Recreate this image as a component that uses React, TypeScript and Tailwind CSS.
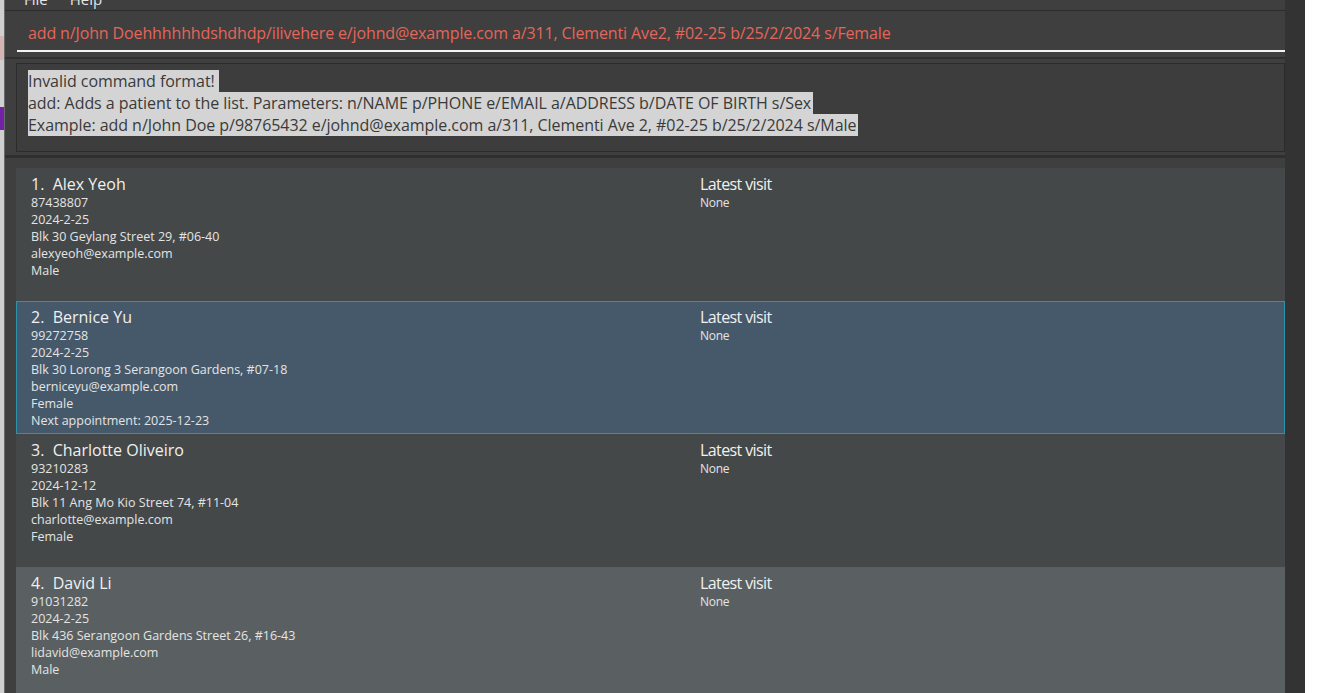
import React from 'react'

type Patient = {
  name: string
  phone: string
  dob: string
  address: string
  email: string
  sex: string
  next?: string
}

const patients: Patient[] = [
  { name: 'Alex Yeoh', phone: '87438807', dob: '2024-2-25', address: 'Blk 30 Geylang Street 29, #06-40', email: 'alexyeoh@example.com', sex: 'Male' },
  { name: 'Bernice Yu', phone: '99272758', dob: '2024-2-25', address: 'Blk 30 Lorong 3 Serangoon Gardens, #07-18', email: 'berniceyu@example.com', sex: 'Female', next: '2025-12-23' },
  { name: 'Charlotte Oliveiro', phone: '93210283', dob: '2024-12-12', address: 'Blk 11 Ang Mo Kio Street 74, #11-04', email: 'charlotte@example.com', sex: 'Female' },
  { name: 'David Li', phone: '91031282', dob: '2024-2-25', address: 'Blk 436 Serangoon Gardens Street 26, #16-43', email: 'lidavid@example.com', sex: 'Male' },
]

function PatientCard({ p, index, selected }: { p: Patient; index: number; selected: boolean }) {
  const bg = selected
    ? 'bg-[#46596b] border border-[#2a95a8]'
    : index % 2 === 0
      ? 'bg-[#444849] border border-transparent'
      : 'bg-[#5a6061] border border-transparent'

  return (
    <div className={`h-[133px] flex ${bg}`}>
      <div className="w-[683px] pl-[14px] pt-[4px] text-[#e4e4e4]">
        <div className="text-[16px] leading-[22px] text-[#f0f0f0]">
          {index + 1}.&nbsp; {p.name}
        </div>
        <div className="text-[12.5px] leading-[17px] -mt-[1px]">
          <div>{p.phone}</div>
          <div>{p.dob}</div>
          <div>{p.address}</div>
          <div>{p.email}</div>
          <div>{p.sex}</div>
          {p.next && <div>Next appointment: {p.next}</div>}
        </div>
      </div>
      <div className="pt-[4px] text-[#e4e4e4]">
        <div className="text-[16px] leading-[22px] tracking-[-0.6px] text-[#f0f0f0]">Latest visit</div>
        <div className="text-[12px] leading-[17px] tracking-[-0.3px] -mt-[1px]">None</div>
      </div>
    </div>
  )
}

export default function App() {
  return (
    <div className="w-[1320px] h-[693px] overflow-hidden bg-white flex" style={{ fontFamily: '"Open Sans", "Noto Sans", sans-serif' }}>
      {/* slice of the window behind */}
      <div className="w-[5px] h-full bg-[#cfcfcf] flex flex-col border-r border-[#6a6a6a] shrink-0">
        <div className="h-[36px]" />
        <div className="h-[24px] bg-[#d6b4b4]" />
        <div className="h-[47px]" />
        <div className="h-[23px] bg-[#7420a8]" />
      </div>

      <div className="w-[1280px] h-full bg-[#3f3f3f] flex flex-col shrink-0">
        {/* menu bar */}
        <div className="h-[10px] overflow-hidden border-b border-[#2c2c2c] box-content">
          <div className="-mt-[11px] pl-[19px] flex gap-[22px] text-[15px] leading-[20px] text-[#e6e6e6]">
            <span>File</span>
            <span>Help</span>
          </div>
        </div>

        {/* command box */}
        <div className="h-[41px] pl-[12px] flex flex-col">
          <div className="flex-1 flex items-center pl-[11px] pt-[5px] text-[16px] tracking-[-0.13px] text-[#e4665a]">
            add n/John Doehhhhhhdshdhdp/ilivehere e/johnd@example.com a/311, Clementi Ave2, #02-25 b/25/2/2024 s/Female
          </div>
          <div className="h-[2px] bg-[#f2f2f2]" />
        </div>

        <div className="h-[11px] flex flex-col justify-center">
          <div className="h-[2px] bg-[#2f2f2f]" />
        </div>

        {/* result box */}
        <div className="ml-[11px] h-[89px] border border-[#2c2c2c] bg-[#3d3d3d] pl-[11px] pt-[6px]">
          <div className="text-[16px] leading-[22px] text-[#3a3a3a] tracking-[-0.05px]">
            <div><span className="bg-[#d4d4d4] pr-[4px]">Invalid command format!</span></div>
            <div><span className="bg-[#d4d4d4] pr-[2px]">add: Adds a patient to the list. Parameters: n/NAME p/PHONE e/EMAIL a/ADDRESS b/DATE OF BIRTH s/Sex</span></div>
            <div><span className="bg-[#d4d4d4] pr-[2px]">Example: add n/John Doe p/98765432 e/johnd@example.com a/311, Clementi Ave 2, #02-25 b/25/2/2024 s/Male</span></div>
          </div>
        </div>

        <div className="h-[16px] flex flex-col pt-[3px]">
          <div className="h-[3px] bg-[#2f2f2f]" />
        </div>

        {/* patient list */}
        <div className="flex-1 pl-[11px] overflow-hidden">
          {patients.map((p, i) => (
            <PatientCard key={p.name} p={p} index={i} selected={i === 1} />
          ))}
        </div>
      </div>

      <div className="w-[20px] h-full bg-[#333333] shrink-0" />
      <div className="flex-1 bg-white" />
    </div>
  )
}
